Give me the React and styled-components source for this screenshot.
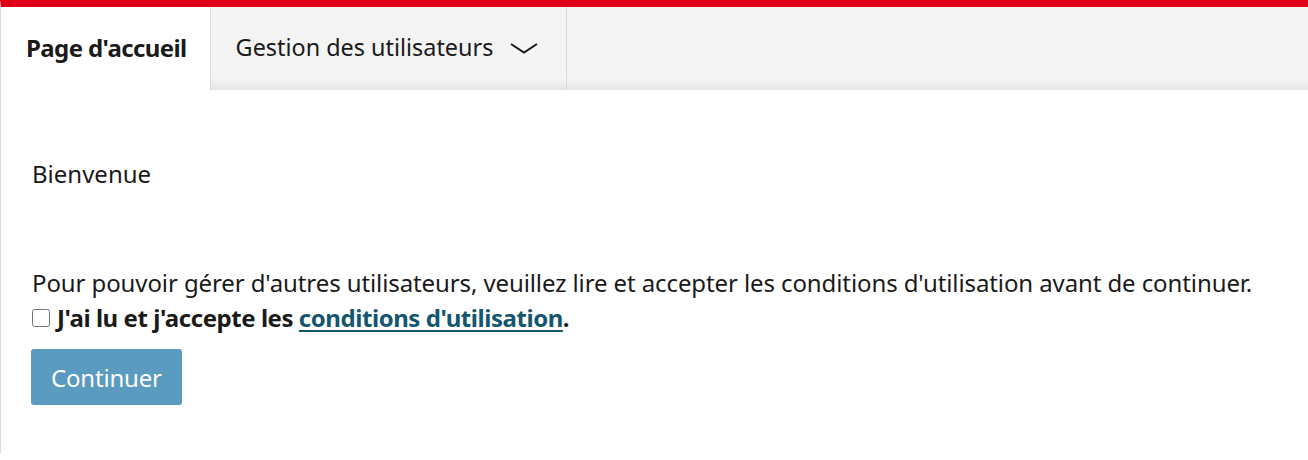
import React from "react";
import styled, { createGlobalStyle } from "styled-components";

const Global = createGlobalStyle`
  html, body { margin: 0; padding: 0; background: #fff; }
  body { font-family: "Noto Sans", "Open Sans", sans-serif; color: #1a1a1a; }
`;

const Page = styled.div`
  border-top: 7px solid #e1001a;
  border-left: 1px solid #dcdcdc;
  min-height: 453px;
  box-sizing: border-box;
`;

const TabBar = styled.nav`
  display: flex;
  height: 83px;
  background: linear-gradient(to bottom, #f4f4f4 0, #f4f4f4 72px, #e6e6e6 83px);
`;

const Tab = styled.div`
  display: flex;
  align-items: center;
  gap: 17px;
  padding: 0 ${(p) => (p.$active ? "23px" : "28px")} 3px 25px;
  font-size: ${(p) => (p.$active ? "24px" : "23.4px")};
  font-weight: ${(p) => (p.$active ? 700 : 400)};
  letter-spacing: ${(p) => (p.$active ? "-0.6px" : "0")};
  color: #1a1a1a;
  background: ${(p) => (p.$active ? "#fff" : "transparent")};
  border-right: 1px solid #d9d9d9;
  white-space: nowrap;
`;

const Chevron = styled.svg`
  width: 28px;
  height: 11px;
  margin-top: 3px;
`;

const Content = styled.main`
  padding: 67px 31px 40px 30px;
  font-size: 24px;
`;

const Welcome = styled.p`
  margin: 0 0 75px 1px;
  line-height: 33px;
`;

const Info = styled.p`
  margin: 0 0 0 1px;
  line-height: 35px;
  letter-spacing: -0.1px;
`;

const Accept = styled.label`
  display: flex;
  align-items: center;
  gap: 7px;
  font-weight: 700;
  letter-spacing: -0.45px;
  line-height: 36px;
`;

const Check = styled.input`
  width: 18px;
  height: 18px;
  margin: 0 0 0 1px;
`;

const Link = styled.a`
  color: #14566f;
  text-decoration: underline;
  text-decoration-thickness: 2px;
  text-underline-offset: 3px;
`;

const Button = styled.button`
  display: block;
  margin-top: 13px;
  height: 56px;
  padding: 0 20px;
  border: none;
  border-radius: 3px;
  background: #5b9bbf;
  color: #fff;
  font-family: "Noto Sans", "Open Sans", sans-serif;
  font-size: 24px;
  letter-spacing: -0.2px;
`;

export default function App() {
  return (
    <>
      <Global />
      <Page>
        <TabBar>
          <Tab $active>Page d'accueil</Tab>
          <Tab>
            Gestion des utilisateurs
            <Chevron viewBox="0 0 28 11">
              <path d="M1 1 L14 9.5 L27 1" fill="none" stroke="#1a1a1a" strokeWidth="2" />
            </Chevron>
          </Tab>
        </TabBar>
        <Content>
          <Welcome>Bienvenue</Welcome>
          <Info>
            Pour pouvoir gérer d'autres utilisateurs, veuillez lire et accepter les conditions d'utilisation avant de continuer.
          </Info>
          <Accept>
            <Check type="checkbox" />
            <span>
              J'ai lu et j'accepte les <Link href="#">conditions d'utilisation</Link>.
            </span>
          </Accept>
          <Button>Continuer</Button>
        </Content>
      </Page>
    </>
  );
}
